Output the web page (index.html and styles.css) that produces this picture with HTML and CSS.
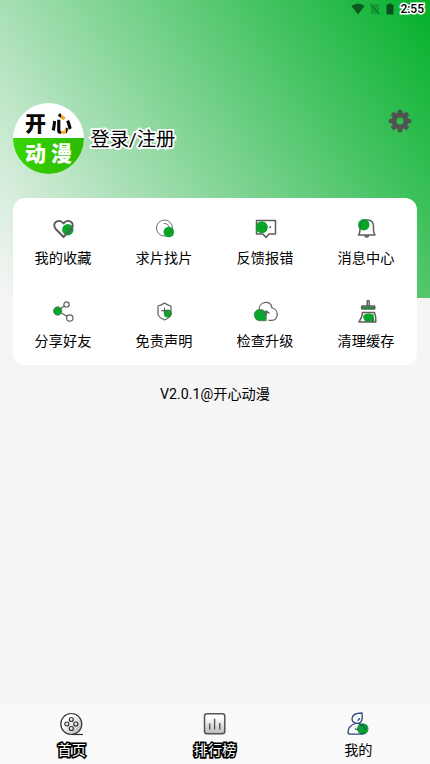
FILE: index.html
```html
<!DOCTYPE html>
<html lang="zh-CN">
<head>
<meta charset="utf-8">
<title>我的</title>
<link rel="stylesheet" href="styles.css">
</head>
<body>
<div class="app">
  <header class="status">
    <svg width="14" height="12" viewBox="0 0 14 12"><path d="M.4 3Q7-2 13.600 3L7 11.500z" fill="#0c5a22"/></svg>
    <svg width="10" height="12" viewBox="0 0 10 12"><path d="M1 3.500L3.500 1H9v10H1z" fill="#159b37"/><path d="M.5 1.500l9 9.500" stroke="#0d7f2b" stroke-width="1.100"/></svg>
    <svg width="8" height="12" viewBox="0 0 8 12"><path d="M.5 1.500h2V.5h3v1h2v10h-7z" fill="#0a4f1c"/></svg>
    <span class="clock">2:55</span>
  </header>

  <section class="profile">
    <div class="avatar">
      <div class="logo-top"><span>开</span><span class="heart-char">心</span></div>
      <div class="logo-bottom"><span>动</span><span>漫</span></div>
    </div>
    <span class="login">登录/注册</span>
    <svg class="gear" width="24" height="24" viewBox="0 0 24 24">
      <g fill="#505451"><g id="teeth"><rect x="9.700" y=".8" width="4.600" height="22.400" rx="1.500"/><rect x=".8" y="9.700" width="22.400" height="4.600" rx="1.500"/></g><use href="#teeth" transform="rotate(45 12 12)"/></g>
      <circle cx="12" cy="12" r="6" fill="none" stroke="#505451" stroke-width="5"/><circle cx="12" cy="12" r="3.500" fill="#30bd50"/>
    </svg>
  </section>

  <main class="card">
    <div class="item">
      <svg class="icon" viewBox="0 0 28 28"><circle cx="18.300" cy="14.800" r="5.700" class="dot"/><path class="line heavy" d="M14 22L6.200 14C1.500 8 9.500 2.500 14 8.500C18.500 2.500 26.500 8 21.800 14z"/></svg>
      <span>我的收藏</span>
    </div>
    <div class="item">
      <svg class="icon" viewBox="0 0 28 28"><circle class="line thin" cx="14" cy="13" r="8"/><path class="line thin" d="M13 8.300q5 0 6 5M20 18l2.500 3"/><circle cx="18.300" cy="17" r="5.300" class="dot"/><path d="M16.500 18.500q3.500 0 4.500-4" class="line faint"/></svg>
      <span>求片找片</span>
    </div>
    <div class="item">
      <svg class="icon" viewBox="0 0 28 28"><path class="line" d="M5 5.500H24V19H17.500L14.500 22.500L11.500 19H5z"/><circle cx="10.300" cy="12.300" r="6" class="dot"/><circle cx="9.500" cy="12.300" r=".8" fill="#246b32"/><circle cx="14" cy="12.300" r=".8" fill="#246b32"/><circle cx="18.700" cy="12.300" r="1" fill="#555"/></svg>
      <span>反馈报错</span>
    </div>
    <div class="item">
      <svg class="icon" viewBox="0 0 28 28"><path class="line" d="M6 20Q7.500 18 7.500 15V11.500Q7.500 5 14.500 5Q21 5 21 11.500V15Q21 18 22.500 20zM12.300 20.500Q14.200 23.500 16.200 20.500"/><circle cx="11.300" cy="9.700" r="5.700" class="dot"/><path class="line faint" d="M7.500 14V11.500Q8.500 5 14.500 5"/></svg>
      <span>消息中心</span>
    </div>
    <div class="item">
      <svg class="icon" viewBox="0 0 28 28"><path class="line slim" d="M8 13L14.700 8M8 13L17.500 18.300"/><circle class="line slim" cx="17" cy="6.400" r="2.600"/><circle class="line slim" cx="20.300" cy="20" r="3.200"/><circle cx="8.200" cy="13" r="4.200" class="dot edge"/></svg>
      <span>分享好友</span>
    </div>
    <div class="item">
      <svg class="icon" viewBox="0 0 28 28"><circle class="dot" cx="17.300" cy="15.500" r="3.900"/><path class="line slim" d="M14 5Q17 7.300 20.500 8V16Q20 19.500 14 22Q8 19.500 7.500 16V8Q11 7.300 14 5z"/><path class="line slim" d="M14 9.500V16M10.800 12.700H17.200"/></svg>
      <span>免责声明</span>
    </div>
    <div class="item">
      <svg class="icon" viewBox="0 0 28 28"><path class="line slim" d="M7.500 11.500C8 2.500 20 2 20.500 10C27.500 11 27.500 22 20 22.300H17"/><path class="dot edge" d="M14.700 22.700H8.500C1 22.700 1 11.500 8 11.500Q12 11 14.700 14.500z"/><path class="line slim" d="M12 15.500L15 13L18 15.500M15 13.500V17"/></svg>
      <span>检查升级</span>
    </div>
    <div class="item">
      <svg class="icon" viewBox="0 0 28 28"><path d="M9 8.300H22V11H9z" class="dot"/><path d="M11 17Q16 14.500 21 16.500L22 23.800H13Q10 20 11 17" class="dot"/><path class="line" d="M14.700 8V3Q15.700 2 16.700 3V8M9.500 8H22Q23 9.500 22 11H9.500Q8.500 9.500 9.500 8zM10 14.500H22Q23.500 18 23.300 24H6.500Q9.500 20 10 14.500z"/><path class="line faint" d="M14 24Q16.500 22 16.500 20M20 24V20"/></svg>
      <span>清理缓存</span>
    </div>
  </main>

  <p class="version">V2.0.1@开心动漫</p>

  <nav class="tabs">
    <div class="tab">
      <svg class="icon" viewBox="0 0 28 28"><defs><linearGradient id="shade" x1="0" y1="0" x2="1" y2="1"><stop offset=".35" stop-color="#fff"/><stop offset="1" stop-color="#aaa"/></linearGradient></defs><g fill="url(#shade)" stroke="#333" stroke-width="1.200"><circle cx="13.300" cy="14" r="10.500"/><g fill="#eee"><circle cx="13.300" cy="9.500" r="2"/><circle cx="8.800" cy="14" r="2"/><circle cx="17.800" cy="14" r="2"/><circle cx="13.300" cy="18.500" r="2"/></g><path d="M14 24.500H25" fill="none"/></g></svg>
      <span class="outlined">首页</span>
    </div>
    <div class="tab">
      <svg class="icon" viewBox="0 0 28 28"><defs><linearGradient id="panel" x1="0" y1="0" x2="0" y2="1"><stop offset=".2" stop-color="#fff"/><stop offset="1" stop-color="#bbb"/></linearGradient></defs><rect x="3.500" y="3.700" width="20.300" height="20" rx="2.500" fill="url(#panel)" stroke="#55525a" stroke-width="1.500"/><path d="M8.700 13.500V19.500M13.600 8.700V19.500M18.700 13V19.500" stroke="#55525a" stroke-width="1.400"/></svg>
      <span class="outlined">排行榜</span>
    </div>
    <div class="tab">
      <svg class="icon" viewBox="0 0 28 28"><circle cx="18.800" cy="18.900" r="5.700" class="dot"/><path d="M18 3Q19.500 13.300 13.300 13.300Q8 13 8 8.500Q8.500 3 18 3zM15.500 8Q15.500 10 13.500 10.500M11.500 13.500Q4 16 4 22Q4 24.200 6.500 24.200H16Q19 24.200 21 22.800M14.500 13.500Q20 15 21.800 20M11 18.500Q12 20 15 19" fill="none" stroke="#29487c" stroke-width="1.300"/></svg>
      <span>我的</span>
    </div>
  </nav>
</div>
</body>
</html>
```
FILE: styles.css
```css
* { box-sizing: border-box; }
body {
  margin: 0;
  font-family: Roboto, "Noto Sans CJK SC", sans-serif;
  color: #000;
}
svg { display: block; flex: none; }
.app {
  height: 764px;
  display: flex;
  flex-direction: column;
  background: linear-gradient(55.280deg, #f6f6f6, #03b02b) 0 0 / 430px 298px no-repeat #f5f5f5;
}
.status {
  height: 20px;
  padding: 0 6px 2px 0;
  display: flex;
  align-items: center;
  justify-content: flex-end;
}
.status svg:nth-child(1) { margin-right: 5px; }
.status svg:nth-child(2) { margin-right: 6px; }
.status svg:nth-child(3) { margin-right: 6px; }
.clock {
  font-size: 12px;
  line-height: 18px;
  font-weight: 500;
  -webkit-text-stroke: 3px #fff;
  paint-order: stroke fill;
}
.profile {
  height: 178px;
  padding: 83px 18px 0 13px;
  display: flex;
  align-items: flex-start;
}
.avatar {
  width: 71px;
  height: 71px;
  border-radius: 50%;
  overflow: hidden;
  background: #fff;
  font-weight: 900;
  font-size: 21px;
  line-height: 32px;
}
.logo-top, .logo-bottom {
  display: flex;
  justify-content: center;
  gap: 5px;
}
.logo-top { height: 35px; padding-top: 5px; color: #080808; }
.heart-char {
  background: linear-gradient(90deg, #080808 46%, #f5a81c 46% 72%, #080808 72%);
  background-clip: text;
  -webkit-background-clip: text;
  color: transparent;
}
.logo-bottom {
  height: 36px;
  color: #fff;
  background: linear-gradient(100deg, #39d600, #29b900);
}
.login {
  margin: 21px auto 0 6.500px;
  font-size: 19.200px;
  line-height: 32px;
  -webkit-text-stroke: 3.500px #fff;
  paint-order: stroke fill;
}
.gear { margin-top: 6px; margin-right: .5px; }
.card {
  height: 167px;
  margin: 0 13px;
  padding-top: 17px;
  display: grid;
  grid-template-columns: repeat(4, 1fr);
  grid-template-rows: 83px 67px;
  background: #fff;
  border-radius: 12px;
  font-size: 14.200px;
}
.item, .tab {
  display: flex;
  flex-direction: column;
  align-items: center;
}
.item { transform: translateX(-.5px); }
.item span { line-height: 20px; margin-top: 5px; }
.icon { width: 28px; height: 28px; }
.line { fill: none; stroke: #5d5d5d; stroke-width: 1.500; stroke-linejoin: round; }
.heavy { stroke-width: 2; }
.slim { stroke-width: 1.200; }
.thin { stroke-width: .9; }
.faint { stroke-width: .9; stroke: #28733a; }
.dot { fill: #08a629; }
.edge { stroke: #456d4d; stroke-width: .7; }
.version {
  margin: 19px 0 0;
  text-align: center;
  font-size: 14.200px;
  line-height: 20px;
}
.tabs {
  height: 60px;
  margin-top: auto;
  padding-top: 6px;
  display: grid;
  grid-template-columns: repeat(3, 1fr);
  background: #fafafa;
  font-size: 14.200px;
}
.tab span { line-height: 20px; margin-top: 2px; }
.tab .outlined {
  color: #fff;
  -webkit-text-stroke: 3.200px #000;
  paint-order: stroke fill;
}
```
